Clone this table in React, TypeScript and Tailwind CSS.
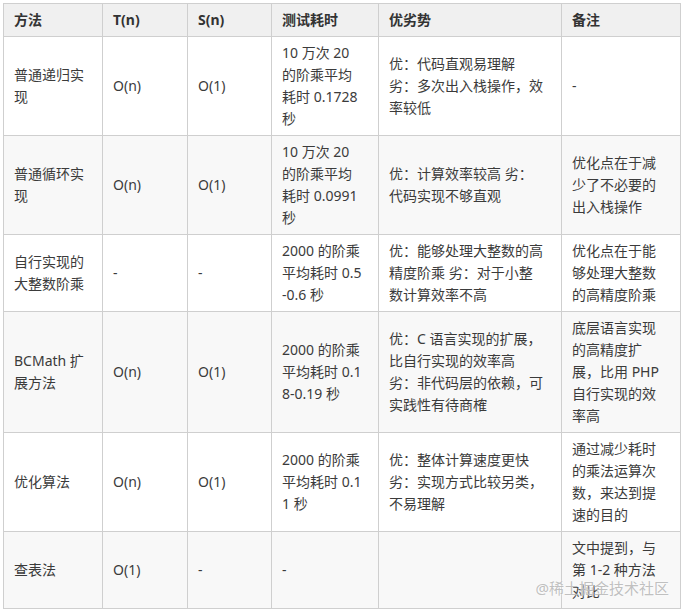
import { Fragment } from 'react';

type Row = {
  cells: string[][];
  shaded: boolean;
};

const headers = ['方法', 'T(n)', 'S(n)', '测试耗时', '优劣势', '备注'];

// column widths measured from the screenshot (border to border)
const widths = ['w-[99px]', 'w-[85px]', 'w-[84px]', 'w-[107px]', 'w-[183px]', 'w-[119px]'];

const rows: Row[] = [
  {
    shaded: false,
    cells: [
      ['普通递归实', '现'],
      ['O(n)'],
      ['O(1)'],
      ['10 万次 20', '的阶乘平均', '耗时 0.1728', '秒'],
      ['优：代码直观易理解', '劣：多次出入栈操作，效', '率较低'],
      ['-'],
    ],
  },
  {
    shaded: true,
    cells: [
      ['普通循环实', '现'],
      ['O(n)'],
      ['O(1)'],
      ['10 万次 20', '的阶乘平均', '耗时 0.0991', '秒'],
      ['优：计算效率较高 劣：', '代码实现不够直观'],
      ['优化点在于减', '少了不必要的', '出入栈操作'],
    ],
  },
  {
    shaded: false,
    cells: [
      ['自行实现的', '大整数阶乘'],
      ['-'],
      ['-'],
      ['2000 的阶乘', '平均耗时 0.5', '-0.6 秒'],
      ['优：能够处理大整数的高', '精度阶乘 劣：对于小整', '数计算效率不高'],
      ['优化点在于能', '够处理大整数', '的高精度阶乘'],
    ],
  },
  {
    shaded: true,
    cells: [
      ['BCMath 扩', '展方法'],
      ['O(n)'],
      ['O(1)'],
      ['2000 的阶乘', '平均耗时 0.1', '8-0.19 秒'],
      ['优：C 语言实现的扩展，', '比自行实现的效率高', '劣：非代码层的依赖，可', '实践性有待商榷'],
      ['底层语言实现', '的高精度扩', '展，比用 PHP', '自行实现的效', '率高'],
    ],
  },
  {
    shaded: false,
    cells: [
      ['优化算法'],
      ['O(n)'],
      ['O(1)'],
      ['2000 的阶乘', '平均耗时 0.1', '1 秒'],
      ['优：整体计算速度更快', '劣：实现方式比较另类，', '不易理解'],
      ['通过减少耗时', '的乘法运算次', '数，来达到提', '速的目的'],
    ],
  },
  {
    shaded: true,
    cells: [
      ['查表法'],
      ['O(1)'],
      ['-'],
      ['-'],
      [],
      ['文中提到，与', '第 1-2 种方法', '对比'],
    ],
  },
];

function Lines({ lines }: { lines: string[] }) {
  return (
    <>
      {lines.map((l, i) => (
        <Fragment key={i}>
          {i > 0 && <br />}
          <span className="whitespace-nowrap">{l}</span>
        </Fragment>
      ))}
    </>
  );
}

export default function App() {
  return (
    <div
      className="relative h-[613px] w-[685px] overflow-hidden bg-white pl-[3px] pt-[3px]"
      style={{ fontFamily: '"Noto Sans", "Noto Sans CJK SC", sans-serif' }}
    >
      <table className="w-[678px] table-fixed border-collapse text-[14px] leading-[22px] text-[#3b3b3b]">
        <thead>
          <tr className="bg-[#f0f0f0]">
            {headers.map((h, i) => (
              <th
                key={h}
                className={`${widths[i]} border border-[#cfcfcf] px-[10px] py-[5px] text-left font-bold text-[#333]`}
              >
                {h}
              </th>
            ))}
          </tr>
        </thead>
        <tbody>
          {rows.map((r, ri) => (
            <tr key={ri} className={r.shaded ? 'bg-[#f8f8f8]' : 'bg-white'}>
              {r.cells.map((c, ci) => (
                <td
                  key={ci}
                  className="border border-[#cfcfcf] px-[10px] py-[5px] align-middle"
                >
                  <Lines lines={c} />
                </td>
              ))}
            </tr>
          ))}
        </tbody>
      </table>

      {/* platform watermark */}
      <div className="pointer-events-none absolute bottom-[15px] right-[16px] text-[15px] leading-[20px] text-[#b8b8b8]/90 [text-shadow:0_0_2px_#fff]">
        @稀土掘金技术社区
      </div>
    </div>
  );
}
